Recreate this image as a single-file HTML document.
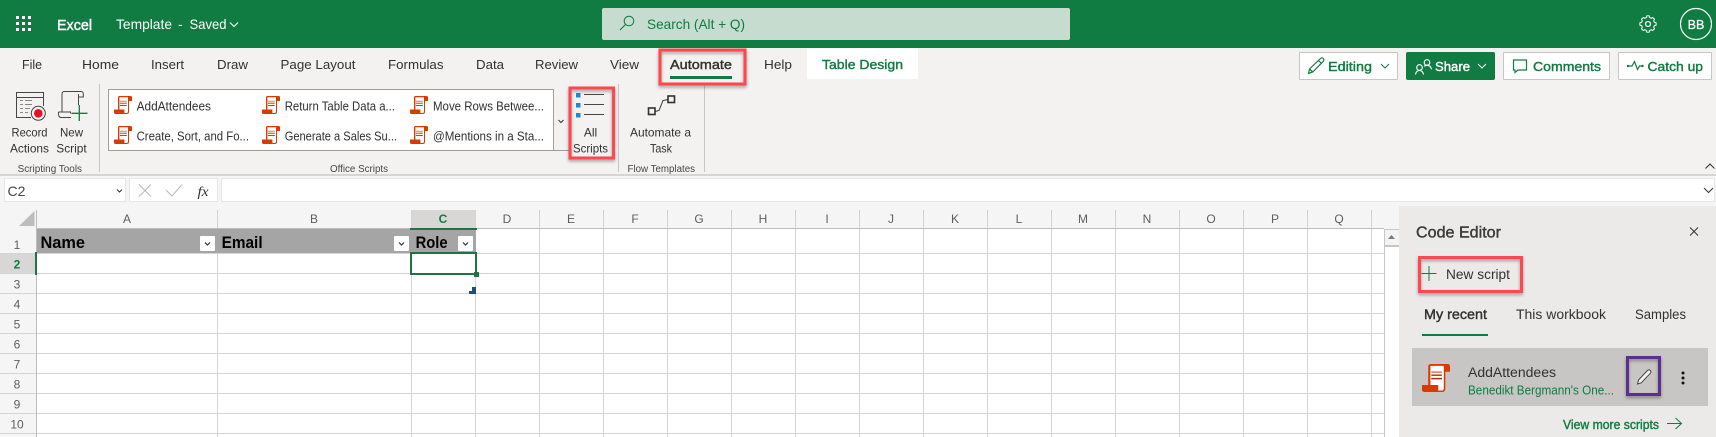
<!DOCTYPE html>
<html><head><meta charset="utf-8"><title>Excel</title>
<style>
html,body{margin:0;padding:0;width:1716px;height:437px;overflow:hidden;background:#fff}
svg{display:block}
text{font-family:"Liberation Sans",sans-serif;font-size:13px;fill:#323130}
.w{fill:#fff}.g{fill:#107C41}.s{font-size:10px;fill:#484644}.m{text-anchor:middle}
.c{font-size:12px;fill:#605e5c;text-anchor:middle}
.h{font-size:16.5px;font-weight:bold;fill:#000}
.l{stroke:#d4d4d4;stroke-width:1;shape-rendering:crispEdges;fill:none}
.r{fill:none;stroke:#FF474F;stroke-width:3;filter:url(#sh)}
.ic{fill:none;stroke:#107C41;stroke-width:1.2}
.chev{fill:none;stroke-width:1}
.sbg{stroke:#107C41;stroke-width:.4}
.sbw{stroke:#fff;stroke-width:.4}
.sbd{stroke:#323130;stroke-width:.4}
</style></head><body>
<svg width="1716" height="437" viewBox="0 0 1716 437" xmlns="http://www.w3.org/2000/svg">
<defs>
<filter id="sh" x="-20%" y="-20%" width="140%" height="150%"><feDropShadow dx="0" dy="2" stdDeviation="1.5" flood-color="#000" flood-opacity=".35"/></filter>
<symbol id="sc" viewBox="0 0 18 18" overflow="visible">
<path d="M4 1.500C4 .6 4.600 0 5.500 0H16.500C17.500 0 18 .6 18 1.500V5H15V16C15 17.200 14.200 18 13 18H1.500C.6 18 0 17.400 0 16.500V13.500H4Z" fill="#D83B01"/>
<path d="M5.400 1.200H13.800C14 1.600 14 2 14 2.600V15.800C14 16.500 13.400 17 12.800 17H10.400V13.500H5.400Z" fill="#fff"/>
<path d="M6 5.200H12.800" stroke="#E8693A" stroke-width=".9"/>
<path d="M6 7.200H12.800M6 9.400H12.800" stroke="#A82D00" stroke-width=".9"/>
</symbol>
</defs>

<!-- backgrounds -->
<rect width="1716" height="437" fill="#fff"/>
<rect width="1716" height="48" fill="#107C41"/>
<rect y="48" width="1716" height="126" fill="#F3F2F1"/>
<rect y="174" width="1716" height="2" fill="#d6d5d3"/>
<rect y="176" width="1716" height="34" fill="#f5f5f5"/>

<!-- top bar -->
<g fill="#fff">
<rect x="16" y="16" width="3" height="3"/><rect x="22" y="16" width="3" height="3"/><rect x="28" y="16" width="3" height="3"/>
<rect x="16" y="22" width="3" height="3"/><rect x="22" y="22" width="3" height="3"/><rect x="28" y="22" width="3" height="3"/>
<rect x="16" y="28" width="3" height="3"/><rect x="22" y="28" width="3" height="3"/><rect x="28" y="28" width="3" height="3"/>
</g>
<text class="w sbw" x="57" y="30" style="font-size:15px" textLength="35" lengthAdjust="spacingAndGlyphs">Excel</text>
<text class="w" x="116" y="29" style="font-size:14px" textLength="56" lengthAdjust="spacingAndGlyphs">Template</text>
<text class="w" x="178" y="29" style="font-size:14px">-</text>
<text class="w" x="189.500" y="29" style="font-size:14px" textLength="37" lengthAdjust="spacingAndGlyphs">Saved</text>
<path class="chev" d="M230 22.500l4 4 4-4" stroke="#fff"/>
<rect x="602" y="8" width="468" height="32" rx="2" fill="#C5DCCE"/>
<circle cx="629" cy="21" r="4.800" fill="none" stroke="#107C41" stroke-width="1"/><path d="M625.500 24.500L620 30" stroke="#107C41" stroke-width="1.100"/>
<text x="647" y="29" style="font-size:14px;fill:#107C41" textLength="98" lengthAdjust="spacingAndGlyphs">Search (Alt + Q)</text>
<g fill="none" stroke="#fff" stroke-width="1.200">
<circle cx="1648" cy="24" r="2.500"/>
<path d="M1646.500 16.500h3l.5 2 1.800.8 1.800-1 2.100 2.100-1 1.800.8 1.800 2 .5v3l-2 .5-.8 1.800 1 1.800-2.100 2.100-1.800-1-1.800.8-.5 2h-3l-.5-2-1.800-.8-1.800 1-2.100-2.100 1-1.800-.8-1.800-2-.5v-3l2-.5.8-1.800-1-1.800 2.100-2.100 1.800 1 1.800-.8z" transform="translate(1648 24) scale(.85) translate(-1648 -26)"/>
<circle cx="1696" cy="24" r="15.500"/>
</g>
<text class="w m sbw" x="1696" y="29" style="font-size:12.500px;stroke-width:.25">BB</text>

<!-- tabs -->
<text x="22" y="69" textLength="20" lengthAdjust="spacingAndGlyphs">File</text>
<text x="82" y="69" textLength="37" lengthAdjust="spacingAndGlyphs">Home</text>
<text x="151" y="69" textLength="33" lengthAdjust="spacingAndGlyphs">Insert</text>
<text x="217" y="69" textLength="31" lengthAdjust="spacingAndGlyphs">Draw</text>
<text x="280.500" y="69" textLength="75" lengthAdjust="spacingAndGlyphs">Page Layout</text>
<text x="388" y="69" textLength="55.500" lengthAdjust="spacingAndGlyphs">Formulas</text>
<text x="476" y="69" textLength="28" lengthAdjust="spacingAndGlyphs">Data</text>
<text x="535" y="69" textLength="43" lengthAdjust="spacingAndGlyphs">Review</text>
<text x="610" y="69" textLength="29" lengthAdjust="spacingAndGlyphs">View</text>
<text class="sbd" x="670" y="69" textLength="62" lengthAdjust="spacingAndGlyphs">Automate</text>
<rect x="670" y="76" width="62" height="3" fill="#107C41"/>
<text x="764" y="69" textLength="28" lengthAdjust="spacingAndGlyphs">Help</text>
<rect x="807" y="48" width="111" height="31" fill="#fff"/>
<text class="g sbg" x="822" y="69" textLength="81" lengthAdjust="spacingAndGlyphs">Table Design</text>

<!-- right buttons -->
<g shape-rendering="crispEdges"><rect x="1299.500" y="52.500" width="98" height="27" rx="1" fill="#fff" stroke="#c8c6c4"/>
<rect x="1503.500" y="52.500" width="106" height="27" rx="1" fill="#fff" stroke="#c8c6c4"/>
<rect x="1618.500" y="52.500" width="93" height="27" rx="1" fill="#fff" stroke="#c8c6c4"/></g>
<rect x="1406" y="52" width="89" height="28" rx="2" fill="#107C41"/>
<path class="ic" d="M1308.500 73.500l1-4.500L1320.500 58.500c.8-.8 2-.8 2.800 0s.8 2 0 2.800L1312.800 72ZM1309.500 69l3.300 3M1318.500 60.500l3 3"/>
<text class="g sbg" x="1328" y="71" textLength="44" lengthAdjust="spacingAndGlyphs">Editing</text>
<path class="chev" d="M1381 64l4 4 4-4" stroke="#107C41"/>
<g fill="none" stroke="#fff" stroke-width="1.100"><circle cx="1419.500" cy="67.500" r="2.800"/><path d="M1415.500 74.500c.5-2.800 2-4 4-4s3.500 1.200 4 4"/><circle cx="1427" cy="62.500" r="2.800"/><path d="M1424 66.300c1-.6 2-1 3-1 2.500 0 4 1.500 4.500 4"/></g>
<text class="w sbw" x="1435" y="71" textLength="35" lengthAdjust="spacingAndGlyphs">Share</text>
<path class="chev" d="M1478 64l4 4 4-4" stroke="#fff"/>
<path class="ic" d="M1513.500 60h13v10h-8.500l-3 2.500V70h-1.500z"/>
<text class="g sbg" x="1533" y="71" textLength="68" lengthAdjust="spacingAndGlyphs">Comments</text>
<path class="ic" d="M1629 66h3l2.500-4.500 3 8 2-3.500h2.500"/><circle cx="1628" cy="66" r="1.200" fill="#107C41"/><circle cx="1642.500" cy="66" r="1.200" fill="#107C41"/>
<text class="g sbg" x="1647.500" y="71" textLength="55.500" lengthAdjust="spacingAndGlyphs">Catch up</text>

<!-- ribbon: record / new -->
<g fill="none" stroke="#484644" stroke-width="1">
<path d="M31 117.500H16.500V92.500H43.500V106M16.500 97.500H43.500"/>
<path d="M20 100.500h3M25 100.500h7M20 104.500h3M25 104.500h7M20 108.500h3M25 108.500h5M20 112.500h3M25 112.500h3" stroke="#8a8886"/>
<circle cx="38.300" cy="113.300" r="7" fill="#f3f2f1"/>
<path d="M62 112V94c0-1.500 1-2.500 2.500-2.500H81c1.500 0 2.300 1 2.300 2.500v3H78.500M78.500 94V105M58.500 112H70.500v1.500M58.500 112c-.5 3 .5 5.500 2.500 5.500H71"/>
</g>
<circle cx="38.300" cy="113.300" r="4.300" fill="#E81123"/>
<path d="M79.300 105v16M71.500 113.300h16" stroke="#107C41" stroke-width="1.300"/>
<g text-anchor="middle" style="font-size:12px">
<text x="29.500" y="136.500" style="font-size:12px" textLength="36" lengthAdjust="spacingAndGlyphs">Record</text>
<text x="29.500" y="152.500" style="font-size:12px" textLength="39" lengthAdjust="spacingAndGlyphs">Actions</text>
<text x="71.500" y="136.500" style="font-size:12px" textLength="23" lengthAdjust="spacingAndGlyphs">New</text>
<text x="71.500" y="152.500" style="font-size:12px" textLength="30.500" lengthAdjust="spacingAndGlyphs">Script</text>
</g>
<text class="s" x="17.600" y="172" textLength="64.400" lengthAdjust="spacingAndGlyphs">Scripting Tools</text>
<rect x="99" y="84" width="1" height="88" fill="#c8c6c4"/>
<rect x="618" y="84" width="1" height="88" fill="#c8c6c4"/>
<rect x="704" y="84" width="1" height="88" fill="#c8c6c4"/>

<!-- gallery -->
<rect x="108.500" y="89.500" width="445" height="61" fill="#fff" stroke="#a19f9d" shape-rendering="crispEdges"/>
<path d="M554 150.500H570" stroke="#a19f9d" shape-rendering="crispEdges"/>
<path class="chev" d="M558.500 120l2.500 2.500 2.500-2.500" stroke="#323130" stroke-width="1.200"/>
<use href="#sc" x="114" y="96" width="18" height="18"/><use href="#sc" x="114" y="126" width="18" height="18"/>
<use href="#sc" x="262" y="96" width="18" height="18"/><use href="#sc" x="262" y="126" width="18" height="18"/>
<use href="#sc" x="410" y="96" width="18" height="18"/><use href="#sc" x="410" y="126" width="18" height="18"/>
<g>
<text x="136.600" y="110.500" style="font-size:12.500px" textLength="74.400" lengthAdjust="spacingAndGlyphs">AddAttendees</text>
<text x="136.600" y="140.500" style="font-size:12.500px" textLength="112.400" lengthAdjust="spacingAndGlyphs">Create, Sort, and Fo...</text>
<text x="284.700" y="110.500" style="font-size:12.500px" textLength="110.300" lengthAdjust="spacingAndGlyphs">Return Table Data a...</text>
<text x="284.700" y="140.500" style="font-size:12.500px" textLength="112.300" lengthAdjust="spacingAndGlyphs">Generate a Sales Su...</text>
<text x="433" y="110.500" style="font-size:12.500px" textLength="111" lengthAdjust="spacingAndGlyphs">Move Rows Betwee...</text>
<text x="433" y="140.500" style="font-size:12.500px" textLength="111" lengthAdjust="spacingAndGlyphs">@Mentions in a Sta...</text>
</g>
<text class="s" x="330" y="172" textLength="58" lengthAdjust="spacingAndGlyphs">Office Scripts</text>

<!-- all scripts -->
<g fill="#1E88D0"><rect x="576" y="93" width="4.500" height="4.500"/><rect x="576" y="103" width="4.500" height="4.500"/><rect x="576" y="113" width="4.500" height="4.500"/></g>
<path d="M584 94.500h20M584 104.500h20M584 114.500h20" stroke="#484644" stroke-width="1"/>
<text x="590.500" y="136.500" style="font-size:12px" text-anchor="middle">All</text>
<text x="590.500" y="152.500" style="font-size:12px" text-anchor="middle" textLength="35" lengthAdjust="spacingAndGlyphs">Scripts</text>
<rect class="r" x="570" y="88" width="43.500" height="70"/>

<!-- automate task -->
<g fill="none" stroke="#323130"><rect x="648.500" y="108" width="6.500" height="6.500" stroke-width="1.600"/><rect x="668" y="96" width="6.500" height="6.500" stroke-width="1.600"/><path d="M655 111.500l4-1 4-10 5-1" stroke-width="1"/></g>
<text x="660.500" y="136.500" style="font-size:12px" text-anchor="middle" textLength="61" lengthAdjust="spacingAndGlyphs">Automate a</text>
<text x="661" y="152.500" style="font-size:12px" text-anchor="middle" textLength="22" lengthAdjust="spacingAndGlyphs">Task</text>
<text class="s" x="627.500" y="172" textLength="67.500" lengthAdjust="spacingAndGlyphs">Flow Templates</text>
<path class="chev" d="M1705.500 168.500l4.500-4.500 4.500 4.500" stroke="#323130"/>

<!-- automate red box -->
<rect class="r" x="660" y="50" width="85" height="34"/>

<!-- formula bar -->
<g fill="#fff" stroke="#e6e6e6" shape-rendering="crispEdges">
<rect x="4.500" y="178.500" width="121" height="23"/>
<rect x="129.500" y="178.500" width="88" height="23"/>
<rect x="221.500" y="178.500" width="1493" height="23"/>
</g>
<text x="7.500" y="196" style="font-size:14px;fill:#484644">C2</text>
<path class="chev" d="M117 189.500l2.500 2.500 2.500-2.500" stroke="#323130" stroke-width="1.200"/>
<path d="M139 184.500l12 12M151 184.500l-12 12M166 190l6 6 10-11.500" stroke="#b8b8b8" fill="none"/>
<text x="197.500" y="196" style="font-family:'Liberation Serif',serif;font-style:italic;font-size:14px;fill:#323130" textLength="11" lengthAdjust="spacingAndGlyphs">fx</text>
<path class="chev" d="M1704 188l4.500 4.500 4.500-4.500" stroke="#323130"/>

<!-- grid headers -->
<rect x="0" y="210" width="1399" height="19" fill="#f5f5f5"/>
<rect x="0" y="229" width="37" height="208" fill="#f5f5f5"/>
<path d="M34.500 211V226H19z" fill="#bdbdbd"/>
<rect x="411" y="210" width="65" height="19" fill="#d8d7d5"/>
<rect x="0" y="253" width="36" height="20" fill="#d8d7d5"/>

<!-- grid lines -->
<path class="l" d="M37 253.500H1384M37 273.500H1384M37 293.500H1384M37 313.500H1384M37 333.500H1384M37 353.500H1384M37 373.500H1384M37 393.500H1384M37 413.500H1384M37 433.500H1384M0 253.500H37M0 273.500H37M0 293.500H37M0 313.500H37M0 333.500H37M0 353.500H37M0 373.500H37M0 393.500H37M0 413.500H37M0 433.500H37"/>
<path class="l" d="M217.500 210V437M411.500 210V437M475.500 210V437M539.500 210V437M603.500 210V437M667.500 210V437M731.500 210V437M795.500 210V437M859.500 210V437M923.500 210V437M987.500 210V437M1051.500 210V437M1115.500 210V437M1179.500 210V437M1243.500 210V437M1307.500 210V437M1371.500 210V437"/>
<rect x="36" y="210" width="1" height="227" fill="#bdbdbd"/>
<rect x="37" y="228" width="1347" height="1" fill="#bdbdbd"/>

<!-- table header -->
<rect x="37" y="229" width="439" height="24" fill="#a5a5a5"/>
<text class="h" x="40.500" y="248" textLength="44.500" lengthAdjust="spacingAndGlyphs">Name</text>
<text class="h" x="221.600" y="248" textLength="41" lengthAdjust="spacingAndGlyphs">Email</text>
<text class="h" x="415.600" y="248" textLength="32" lengthAdjust="spacingAndGlyphs">Role</text>
<g fill="#fff"><rect x="200" y="236" width="15" height="15" rx="1"/><rect x="394" y="236" width="15" height="15" rx="1"/><rect x="458" y="236" width="15" height="15" rx="1"/></g>
<g fill="none" stroke="#323130" stroke-width="1.200"><path d="M205 242.500l2.500 2.500 2.500-2.500"/><path d="M399 242.500l2.500 2.500 2.500-2.500"/><path d="M463 242.500l2.500 2.500 2.500-2.500"/></g>

<!-- column labels -->
<text class="c" x="127" y="223">A</text><text class="c" x="314" y="223">B</text>
<text class="c" x="443" y="223" style="fill:#107C41;font-weight:bold">C</text>
<text class="c" x="507" y="223">D</text><text class="c" x="571" y="223">E</text><text class="c" x="635" y="223">F</text><text class="c" x="699" y="223">G</text><text class="c" x="763" y="223">H</text><text class="c" x="827" y="223">I</text><text class="c" x="891" y="223">J</text><text class="c" x="955" y="223">K</text><text class="c" x="1019" y="223">L</text><text class="c" x="1083" y="223">M</text><text class="c" x="1147" y="223">N</text><text class="c" x="1211" y="223">O</text><text class="c" x="1275" y="223">P</text><text class="c" x="1339" y="223">Q</text>
<!-- row labels -->
<text class="c" x="17" y="249">1</text>
<text class="c" x="17" y="268.500" style="fill:#107C41;font-weight:bold">2</text>
<text class="c" x="17" y="288.500">3</text><text class="c" x="17" y="308.500">4</text><text class="c" x="17" y="328.500">5</text><text class="c" x="17" y="348.500">6</text><text class="c" x="17" y="368.500">7</text><text class="c" x="17" y="388.500">8</text><text class="c" x="17" y="408.500">9</text><text class="c" x="17" y="428.500">10</text>

<!-- selection -->
<rect x="410" y="228" width="67" height="2" fill="#217346"/>
<rect x="35" y="252" width="2" height="23" fill="#217346"/>
<rect x="411" y="253" width="65" height="21" fill="#fff" stroke="#217346" stroke-width="2"/>
<rect x="474" y="272" width="5" height="5" fill="#217346"/>
<path d="M476 288h1v7h-7v-3h3v-4z" transform="translate(-1 -1)" fill="#1F4E79"/>

<!-- scrollbar -->
<rect x="1384" y="229" width="15" height="208" fill="#fff"/>
<rect x="1384" y="229" width="1" height="208" fill="#c8c8c8"/>
<rect x="1384" y="229" width="15" height="1" fill="#c8c8c8"/>
<rect x="1384" y="245" width="15" height="2" fill="#c8c6c4"/>
<rect x="1385" y="230" width="14" height="15" fill="#f3f3f3"/>
<path d="M1388 239l3.500-4 3.500 4z" fill="#7a7a7a"/>
<rect x="1399" y="206" width="1" height="231" fill="#c8c6c4"/>

<!-- side panel -->
<rect x="1399" y="206" width="317" height="231" fill="#ECEAE9"/>
<text class="sbd" x="1416" y="237.500" style="font-size:15.500px;fill:#3b3a39;stroke:#3b3a39" textLength="85" lengthAdjust="spacingAndGlyphs">Code Editor</text>
<path d="M1690 227.500l8 8M1698 227.500l-8 8" stroke="#323130" fill="none"/>
<path d="M1429 266v15M1421.500 273.500h15" stroke="#107C41"/>
<text x="1446" y="279" style="font-size:13.500px" textLength="64" lengthAdjust="spacingAndGlyphs">New script</text>
<rect class="r" x="1419.500" y="257.500" width="102" height="34"/>
<text class="sbd" x="1424" y="319" style="font-size:13.500px" textLength="63" lengthAdjust="spacingAndGlyphs">My recent</text>
<text x="1516" y="319" style="font-size:13.500px" textLength="90" lengthAdjust="spacingAndGlyphs">This workbook</text>
<text x="1635" y="319" style="font-size:13.500px" textLength="51" lengthAdjust="spacingAndGlyphs">Samples</text>
<rect x="1422" y="334" width="66" height="2" fill="#107C41"/>
<rect x="1412" y="348" width="296" height="58" fill="#C8C6C4"/>
<use href="#sc" x="1422" y="364" width="28" height="28"/>
<text x="1468" y="377" style="font-size:13.500px" textLength="88" lengthAdjust="spacingAndGlyphs">AddAttendees</text>
<text class="g" x="1468" y="394.500" style="font-size:12.500px" textLength="146" lengthAdjust="spacingAndGlyphs">Benedikt Bergmann's One...</text>
<path d="M1637.500 384l1-4 9-9.500c.8-.8 2-.8 2.800 0s.8 2 0 2.800l-9 9.500z" fill="#f3f2f1" stroke="#484644"/>
<rect x="1627.500" y="357.500" width="32" height="37" fill="none" stroke="#5C2D91" stroke-width="3" filter="url(#sh)"/>
<g fill="#111"><circle cx="1683" cy="373" r="1.500"/><circle cx="1683" cy="378" r="1.500"/><circle cx="1683" cy="383" r="1.500"/></g>
<text class="g sbg" x="1563" y="429" style="font-size:12.500px" textLength="96" lengthAdjust="spacingAndGlyphs">View more scripts</text>
<path d="M1667 423.500h14M1675.500 418l6 5.500-6 5.500" stroke="#107C41" fill="none"/>
</svg>
</body></html>
